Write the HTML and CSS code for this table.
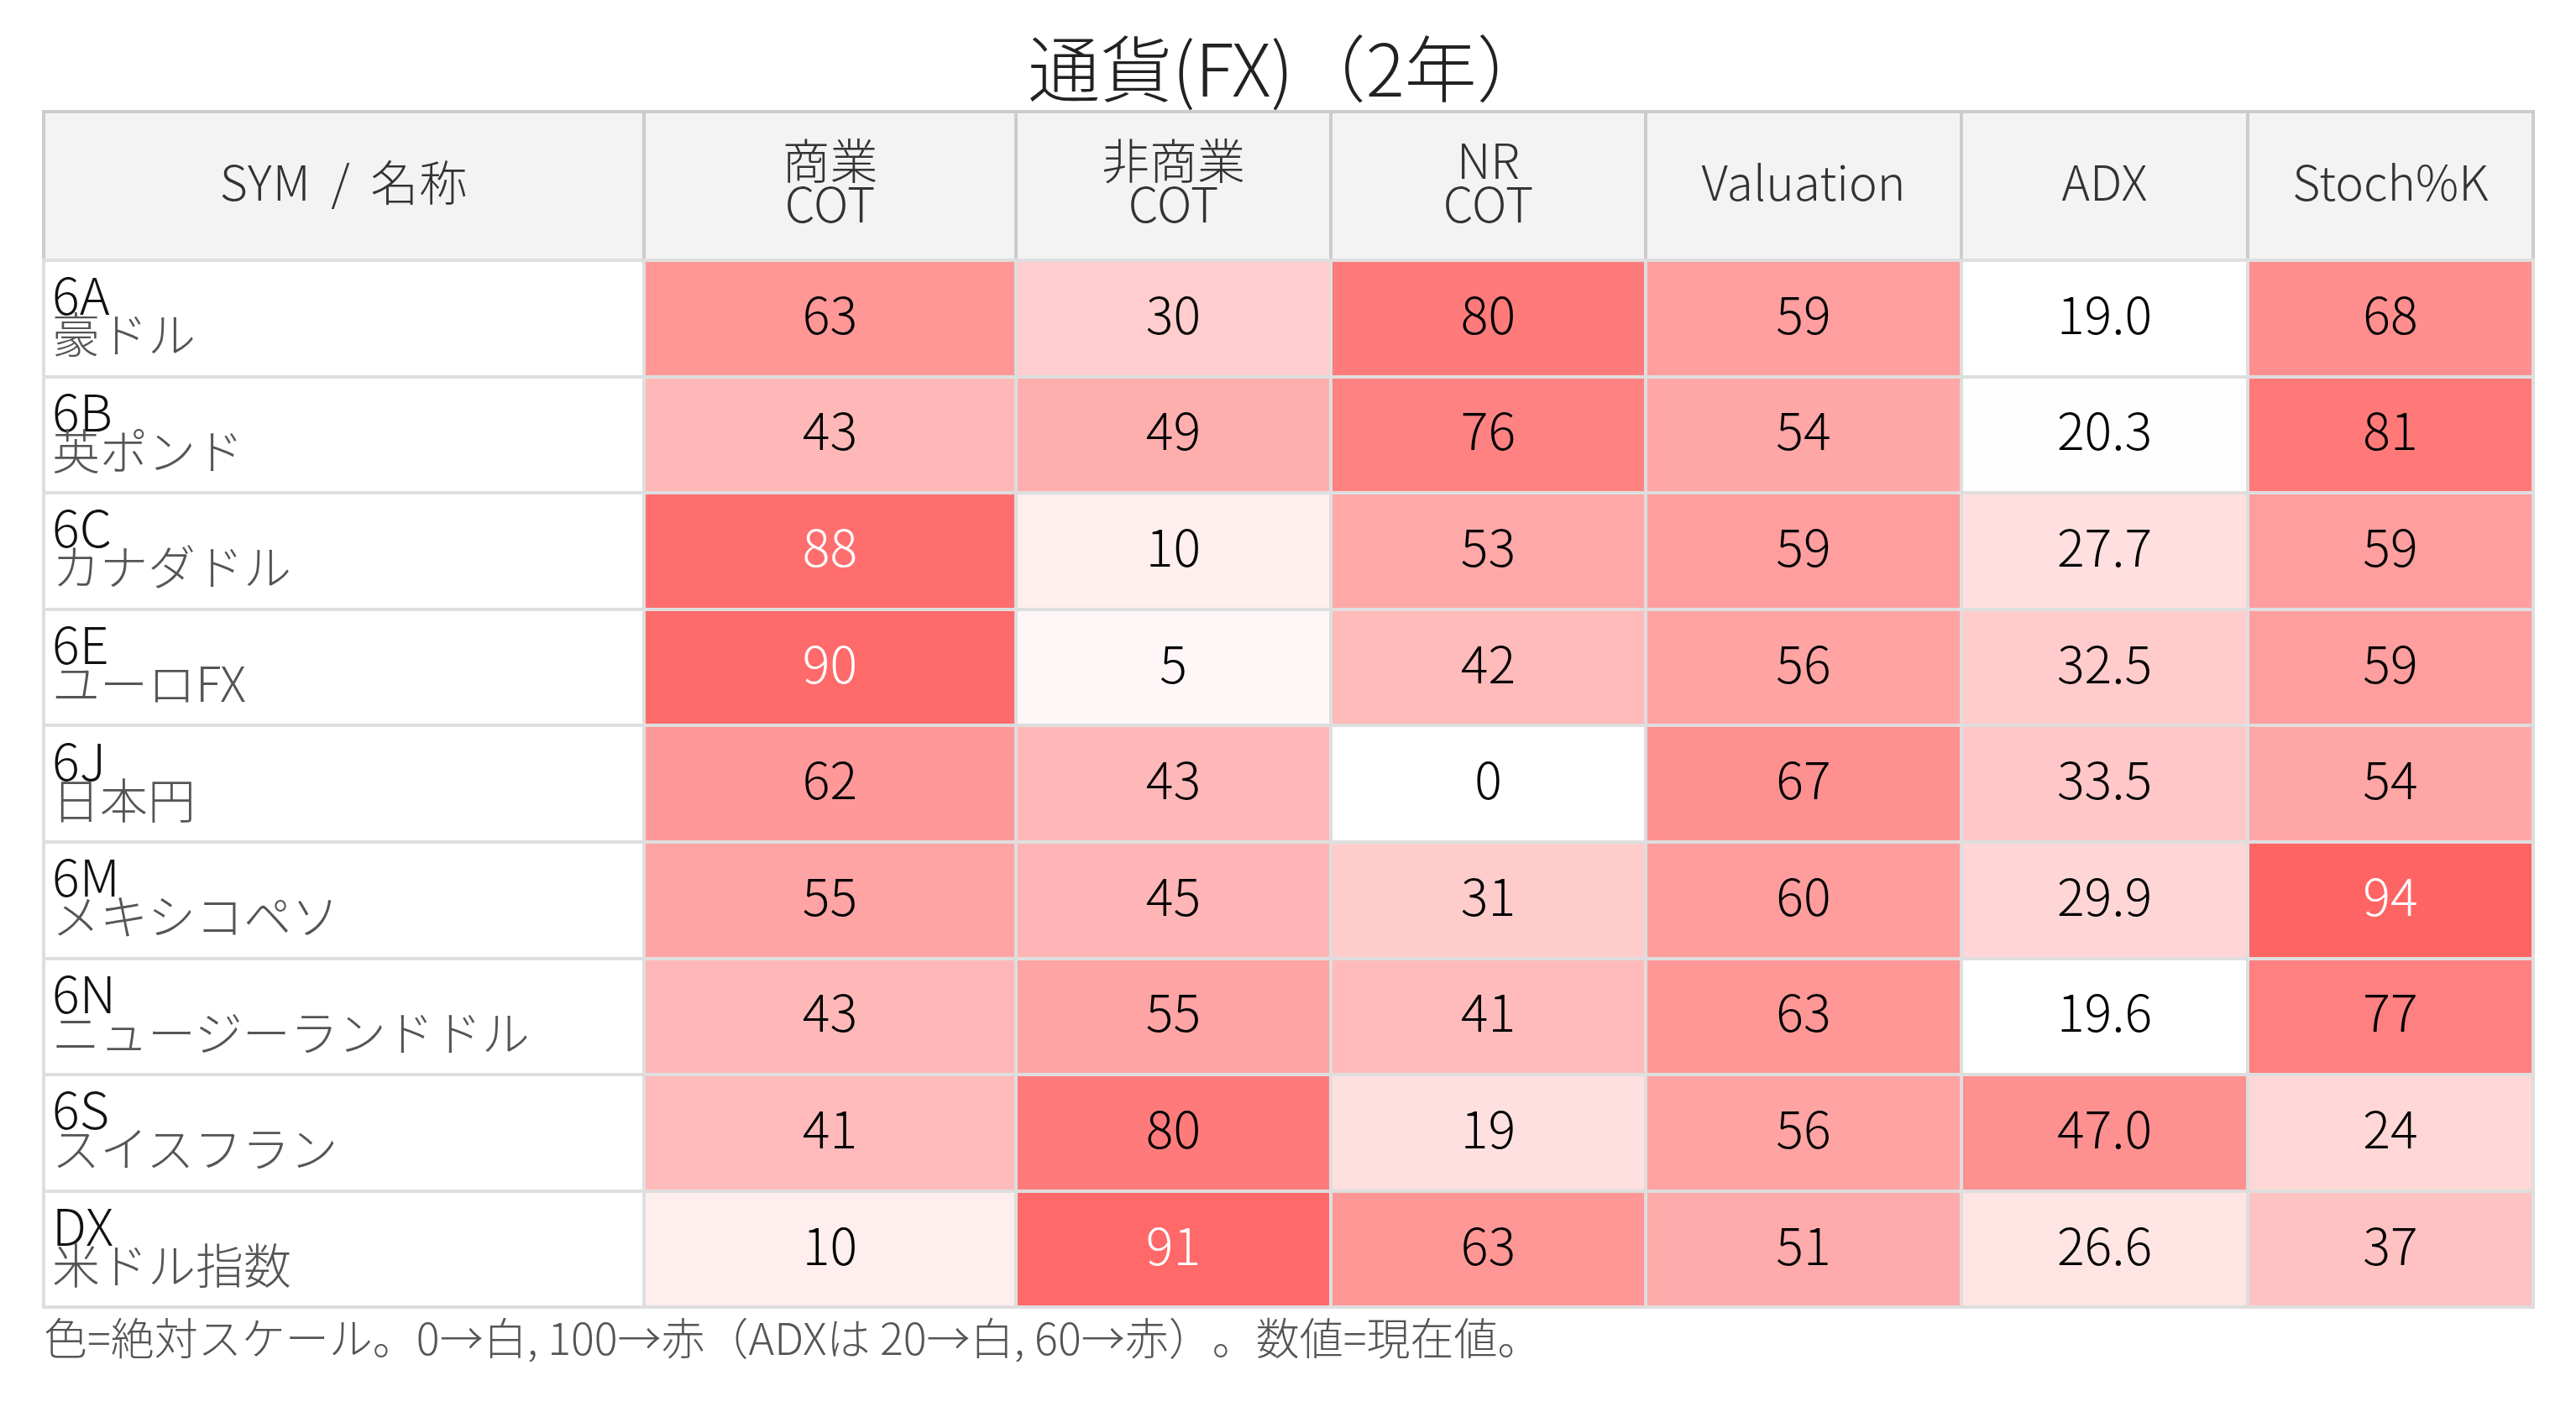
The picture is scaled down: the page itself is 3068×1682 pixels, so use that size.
FILE: index.html
```html
<!DOCTYPE html>
<html lang="ja">
<head>
<meta charset="utf-8">
<title>通貨(FX)（2年）</title>
<link rel="stylesheet" href="styles.css">
</head>
<body>
<div class="page">
  <h1 class="title">通貨(FX)（2年）</h1>
  <div class="table">
    <div class="head">
      <div class="hc"><span class="wide">SYM / 名称</span></div>
      <div class="hc"><span>商業<br>COT</span></div>
      <div class="hc"><span>非商業<br>COT</span></div>
      <div class="hc"><span>NR<br>COT</span></div>
      <div class="hc"><span>Valuation</span></div>
      <div class="hc"><span>ADX</span></div>
      <div class="hc"><span>Stoch%K</span></div>
    </div>
    <div class="body">
      <div class="name"><span class="sym">6A</span><span class="jp">豪ドル</span></div>
      <div class="v" style="background:#ff9797">63</div>
      <div class="v" style="background:#ffcdcd">30</div>
      <div class="v" style="background:#ff7b7b">80</div>
      <div class="v" style="background:#ff9e9e">59</div>
      <div class="v" style="background:#ffffff">19.0</div>
      <div class="v" style="background:#ff8f8f">68</div>

      <div class="name"><span class="sym">6B</span><span class="jp">英ポンド</span></div>
      <div class="v" style="background:#ffb8b8">43</div>
      <div class="v" style="background:#ffaeae">49</div>
      <div class="v" style="background:#ff8282">76</div>
      <div class="v" style="background:#ffa6a6">54</div>
      <div class="v" style="background:#fffefe">20.3</div>
      <div class="v" style="background:#ff7979">81</div>

      <div class="name"><span class="sym">6C</span><span class="jp">カナダドル</span></div>
      <div class="v hot" style="background:#ff6e6e">88</div>
      <div class="v" style="background:#ffeeee">10</div>
      <div class="v" style="background:#ffa8a8">53</div>
      <div class="v" style="background:#ff9e9e">59</div>
      <div class="v" style="background:#ffdfdf">27.7</div>
      <div class="v" style="background:#ff9e9e">59</div>

      <div class="name"><span class="sym">6E</span><span class="jp">ユーロFX</span></div>
      <div class="v hot" style="background:#ff6a6a">90</div>
      <div class="v" style="background:#fff7f7">5</div>
      <div class="v" style="background:#ffbaba">42</div>
      <div class="v" style="background:#ffa3a3">56</div>
      <div class="v" style="background:#ffcbcb">32.5</div>
      <div class="v" style="background:#ff9e9e">59</div>

      <div class="name"><span class="sym">6J</span><span class="jp">日本円</span></div>
      <div class="v" style="background:#ff9999">62</div>
      <div class="v" style="background:#ffb8b8">43</div>
      <div class="v" style="background:#ffffff">0</div>
      <div class="v" style="background:#ff9090">67</div>
      <div class="v" style="background:#ffc7c7">33.5</div>
      <div class="v" style="background:#ffa6a6">54</div>

      <div class="name"><span class="sym">6M</span><span class="jp">メキシコペソ</span></div>
      <div class="v" style="background:#ffa4a4">55</div>
      <div class="v" style="background:#ffb5b5">45</div>
      <div class="v" style="background:#ffcccc">31</div>
      <div class="v" style="background:#ff9c9c">60</div>
      <div class="v" style="background:#ffd6d6">29.9</div>
      <div class="v hot" style="background:#ff6464">94</div>

      <div class="name"><span class="sym">6N</span><span class="jp">ニュージーランドドル</span></div>
      <div class="v" style="background:#ffb8b8">43</div>
      <div class="v" style="background:#ffa4a4">55</div>
      <div class="v" style="background:#ffbbbb">41</div>
      <div class="v" style="background:#ff9797">63</div>
      <div class="v" style="background:#ffffff">19.6</div>
      <div class="v" style="background:#ff8080">77</div>

      <div class="name"><span class="sym">6S</span><span class="jp">スイスフラン</span></div>
      <div class="v" style="background:#ffbbbb">41</div>
      <div class="v" style="background:#ff7b7b">80</div>
      <div class="v" style="background:#ffe0e0">19</div>
      <div class="v" style="background:#ffa3a3">56</div>
      <div class="v" style="background:#ff9090">47.0</div>
      <div class="v" style="background:#ffd7d7">24</div>

      <div class="name"><span class="sym">DX</span><span class="jp">米ドル指数</span></div>
      <div class="v" style="background:#ffeeee">10</div>
      <div class="v hot" style="background:#ff6969">91</div>
      <div class="v" style="background:#ff9797">63</div>
      <div class="v" style="background:#ffabab">51</div>
      <div class="v" style="background:#ffe4e4">26.6</div>
      <div class="v" style="background:#ffc2c2">37</div>
    </div>
  </div>
  <p class="note">色=絶対スケール。0→白, 100→赤（ADXは 20→白, 60→赤）。数値=現在値。</p>
</div>
</body>
</html>
```
FILE: styles.css
```css
html, body {
  margin: 0;
  padding: 0;
  background: #ffffff;
}

body {
  font-family: "Noto Sans CJK JP", "Noto Sans", sans-serif;
  font-weight: 300;
  color: #111;
  text-spacing-trim: space-all;
}

.page {
  padding: 37px 0 0 50px;
  width: 2969px;
}

.title {
  margin: 0 0 12px 0;
  height: 82px;
  font-size: 86px;
  line-height: 82px;
  font-weight: 300;
  text-align: center;
  color: #222;
}

.table {
  width: 2969px;
}

.head,
.body {
  display: grid;
  grid-template-columns: 711px 439px 371px 371px 372px 337px 336px;
  column-gap: 4px;
}

.head {
  background: #cccccc;
  padding: 4px 4px 0 4px;
  grid-template-rows: 173px;
}

.body {
  background: #dedede;
  padding: 4px;
  row-gap: 4px;
  grid-auto-rows: 134.6px;
}

.hc {
  background: #f3f3f3;
  display: flex;
  align-items: center;
  justify-content: center;
  text-align: center;
  padding-bottom: 16px;
  box-sizing: border-box;
  font-size: 57px;
  line-height: 52px;
  color: #333;
}

.wide {
  word-spacing: 10px;
  letter-spacing: 1px;
}

.name {
  background: #ffffff;
  display: flex;
  flex-direction: column;
  justify-content: center;
  padding: 0 0 14px 8px;
  box-sizing: border-box;
  line-height: 47px;
}

.sym {
  font-size: 61px;
  color: #111;
}

.jp {
  font-size: 57px;
  color: #555;
}

.v {
  display: flex;
  align-items: center;
  justify-content: center;
  padding-bottom: 16px;
  box-sizing: border-box;
  font-size: 61px;
  line-height: 61px;
  color: #000;
}

.v.hot {
  color: #ffffff;
}

.note {
  margin: 3px 0 0 2px;
  font-size: 52px;
  line-height: 60px;
  color: #555;
  white-space: nowrap;
}
```
